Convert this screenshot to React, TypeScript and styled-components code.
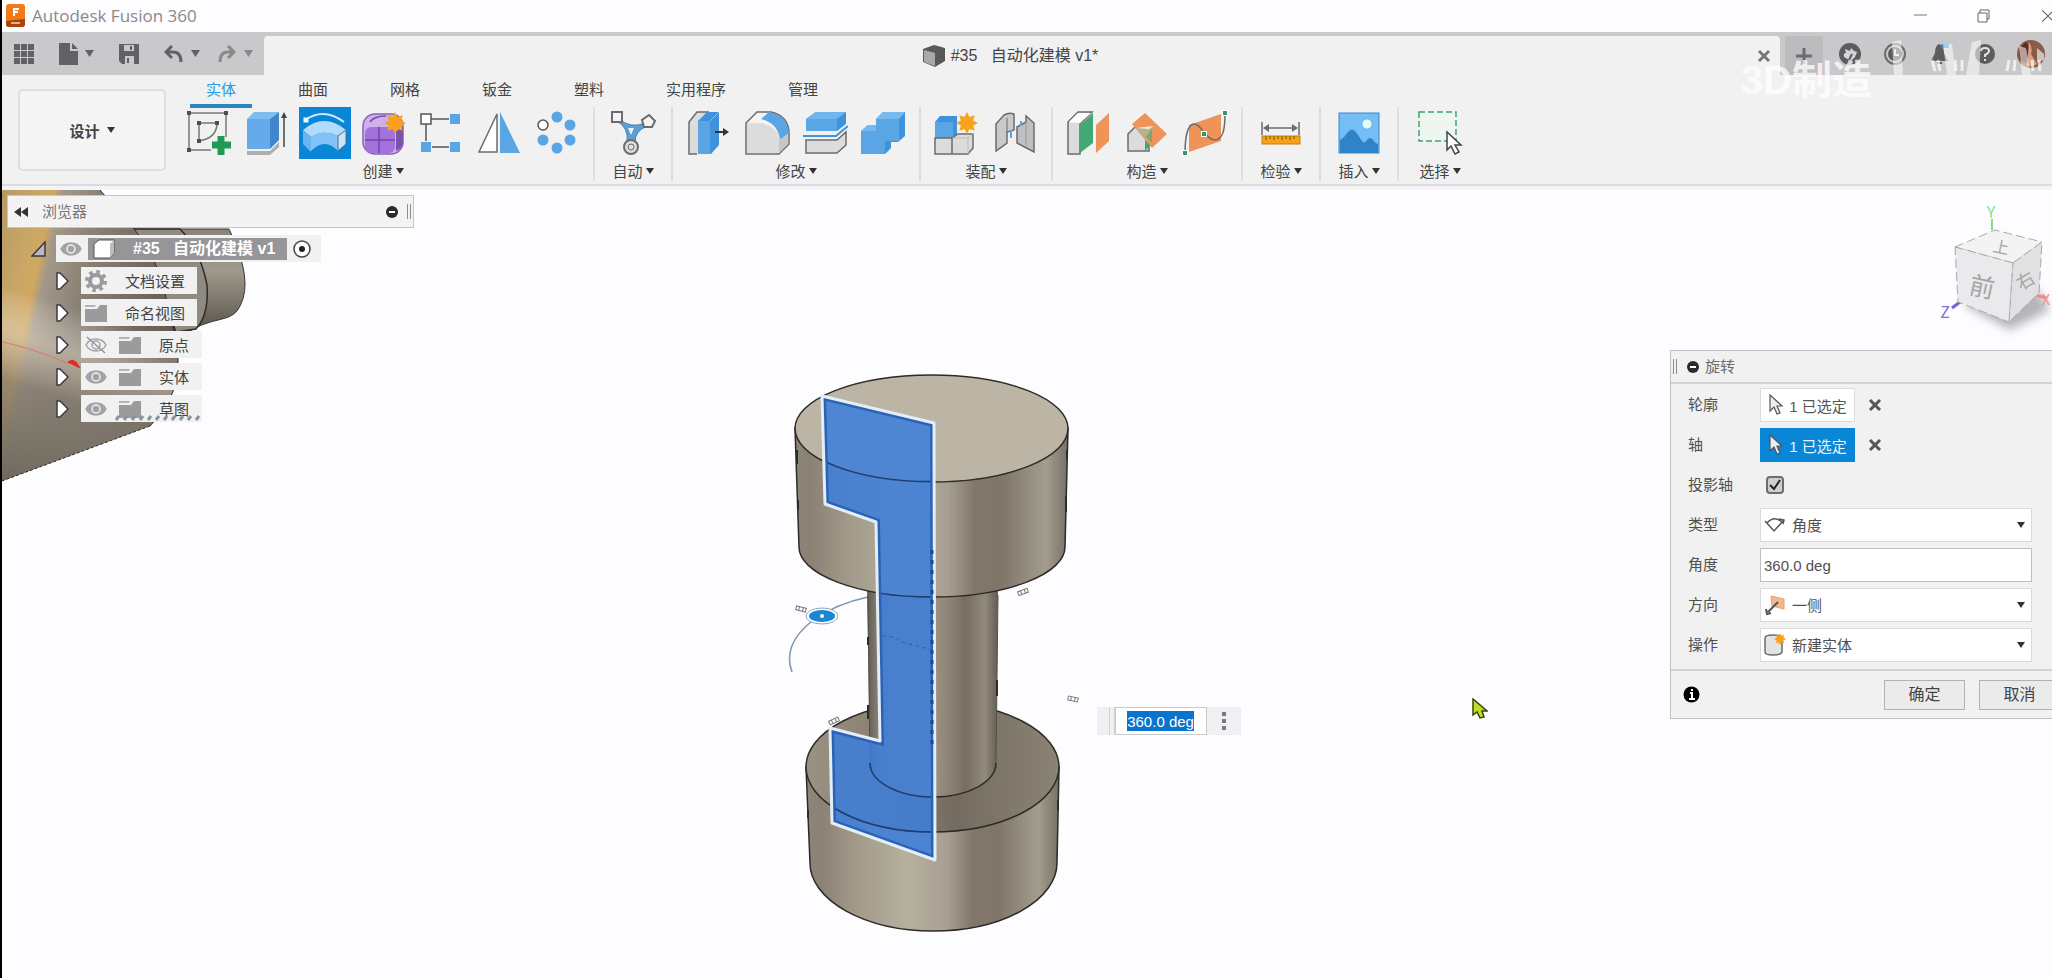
import React from 'react';
import styled, { createGlobalStyle, css } from 'styled-components';

const GlobalStyle = createGlobalStyle`
  *, *::before, *::after { box-sizing: border-box; }
  body { margin: 0; background: #fdfcfe; }
  body, button, input, select {
    font-family: "Liberation Sans", "Noto Sans CJK SC", sans-serif;
    font-size: 15px;
    color: #444;
  }
  button { border: 0; padding: 0; background: none; }
  svg { display: block; flex: none; }
`;

/* ---------- window frame ---------- */

const Window = styled.div`
  display: flex;
  flex-direction: column;
  min-height: 100vh;
  overflow: hidden;
  border-left: 2px solid #000;
`;

const TitleBar = styled.header`
  display: flex;
  align-items: center;
  height: 32px;
  padding-left: 4px;
  background: #fdfcfe;
`;

const AppTitle = styled.h1`
  flex: 1;
  margin: 0 0 0 7px;
  font: 400 17px/24px "Open Sans", sans-serif;
  color: #8a898b;
`;

const WindowButtons = styled.div`
  display: flex;
  gap: 48px;
  margin-right: -4px;
`;

const FlatButton = styled.button`
  display: flex;
  align-items: center;
  justify-content: center;
`;

/* ---------- document bar ---------- */

const DocumentBar = styled.div`
  position: relative;
  display: flex;
  height: 43px;
  background: #c9c8ca;
`;

const QuickTools = styled.div`
  display: flex;
  align-items: center;
  width: 262px;
  padding-left: 12px;
`;

const QuickButton = styled(FlatButton)<{ $gap: number; $dim?: boolean }>`
  gap: 7px;
  margin-right: ${(p) => p.$gap}px;
  opacity: ${(p) => (p.$dim ? 0.5 : 1)};
`;

const DocumentTab = styled.div`
  display: flex;
  flex: 1;
  align-items: center;
  margin-top: 4px;
  padding: 1px 9px 0 0;
  border-radius: 4px 4px 0 0;
  background: #f1f1f2;
`;

const DocumentName = styled.div`
  display: flex;
  flex: 1;
  align-items: center;
  justify-content: center;
  gap: 6px;
  font-size: 16px;
  line-height: 24px;
  white-space: pre;
`;

const AccountTools = styled.div`
  display: flex;
  align-items: center;
  width: 272px;
  padding-left: 5px;
  overflow: hidden;
`;

const NewTabButton = styled(FlatButton)`
  flex: none;
  align-self: flex-end;
  width: 38px;
  height: 39px;
  margin-right: 16px;
  border-radius: 4px 4px 0 0;
  background: #bcbbbd;
`;

const AccountButton = styled(FlatButton)`
  flex: none;
  width: 22px;
  margin-right: 23px;
`;

const Watermark = styled.div`
  position: absolute;
  top: 24px;
  right: 180px;
  font: 700 40px/48px "Liberation Sans", "Noto Sans CJK SC", sans-serif;
  color: rgba(255, 255, 255, 0.75);
  pointer-events: none;
`;

const Streaks = styled.svg`
  position: absolute;
  top: 6px;
  right: 0;
  pointer-events: none;
`;

/* ---------- ribbon ---------- */

const Ribbon = styled.div`
  display: flex;
  height: 111px;
  background: #f1f1f2;
  border-bottom: 2px solid #dcdbde;
`;

const RibbonShade = styled.div`
  height: 4px;
  background: #f4f4f8;
`;

const WorkspaceButton = styled(FlatButton)`
  gap: 7px;
  width: 148px;
  height: 82px;
  margin: 14px 14px 0 16px;
  border: 2px solid #dedde0;
  border-radius: 5px;
  background: #f4f4f5;
  font-weight: 700;
`;

const RibbonBody = styled.div`
  flex: 1;
`;

const RibbonTabs = styled.nav`
  display: flex;
  gap: 30px;
  height: 32px;
  padding-left: 10px;
`;

const RibbonTab = styled.button<{ $active?: boolean }>`
  height: 33px;
  padding: 0 16px 4px;
  line-height: 28px;
  white-space: nowrap;
  ${(p) =>
    p.$active &&
    css`
      color: #2b9ae0;
      border-bottom: 4px solid #2b87bd;
      padding-bottom: 0;
    `}
`;

const RibbonGroups = styled.div`
  display: flex;
`;

const Group = styled.section<{ $single?: boolean }>`
  display: flex;
  flex-direction: column;
  height: 74px;
  padding: 0 ${(p) => (p.$single ? 9 : 7)}px;
  border-right: 2px solid #dedde0;
  &:first-child { padding-left: 0; }
  &:last-child { padding-left: 12px; border-right: 0; }
`;

const GroupTools = styled.div`
  display: flex;
`;

const ToolButton = styled(FlatButton)<{ $active?: boolean }>`
  width: ${(p) => (p.$active ? 52 : 58)}px;
  height: 52px;
  margin: 0 ${(p) => (p.$active ? 3 : 0)}px;
  background: ${(p) => (p.$active ? '#0a86d6' : 'transparent')};
`;

const GroupLabel = styled(FlatButton)`
  gap: 3px;
  height: 22px;
  margin-top: 1px;
  white-space: nowrap;
`;

/* ---------- canvas ---------- */

const Canvas = styled.main`
  position: relative;
  flex: 1;
  min-height: 788px;
  overflow: hidden;
  background: #fdfcfe;
`;

const BackgroundPart = styled.svg`
  position: absolute;
  top: 0;
  left: 0;
`;

const ModelDrawing = styled.svg`
  position: absolute;
  top: 170px;
  left: 38%;
`;

const ViewCube = styled.svg`
  position: absolute;
  top: 0;
  right: 0;
  font-family: "Noto Sans CJK SC", sans-serif;
`;

const PointerArrow = styled.svg`
  position: absolute;
  top: 508px;
  left: 71.7%;
`;

const Browser = styled.aside`
  position: absolute;
  top: 5px;
  left: 5px;
  width: 407px;
`;

const BrowserHeader = styled.div`
  display: flex;
  align-items: center;
  height: 33px;
  padding: 0 2px 0 6px;
  border: 1px solid #c6c5c7;
  background: #f3f3f4;
`;

const BrowserTitle = styled.h2`
  flex: 1;
  margin: 0 0 0 14px;
  font-size: 15px;
  line-height: 22px;
  font-weight: 400;
  color: #777;
`;

const HeaderGrip = styled.span`
  width: 4px;
  height: 15px;
  margin-left: 9px;
  border: solid #8d8c8e;
  border-width: 0 1px;
`;

const Tree = styled.ul`
  display: flex;
  flex-direction: column;
  gap: 5px;
  margin: 7px 0 0;
  padding: 0;
  list-style: none;
`;

const TreeItem = styled.li<{ $root?: boolean }>`
  display: flex;
  align-items: center;
  gap: ${(p) => (p.$root ? 10 : 12)}px;
  height: 27px;
  padding-left: ${(p) => (p.$root ? 24 : 49)}px;
`;

const TreeBox = styled.div<{ $root?: boolean; $wide?: boolean }>`
  position: relative;
  display: flex;
  align-items: center;
  gap: ${(p) => (p.$root ? 6 : 12)}px;
  height: 27px;
  padding-left: 4px;
  width: ${(p) => (p.$root ? 265 : p.$wide ? 121 : 116)}px;
  background: #f1f1f2;
  white-space: pre;
`;

const TreeLabel = styled.span`
  margin-left: 6px;
`;

const RootLabel = styled.span`
  display: flex;
  align-items: center;
  gap: 18px;
  height: 22px;
  width: 199px;
  padding-left: 5px;
  background: #969597;
  color: #fff;
  font-size: 16px;
  line-height: 22px;
  font-weight: 700;
`;

const Hatch = styled.svg`
  position: absolute;
  left: 34px;
  bottom: 1px;
`;

const ValuePopup = styled.div`
  position: absolute;
  top: 517px;
  left: 53.4%;
  display: flex;
  width: 144px;
  height: 28px;
  padding-left: 12px;
  background: #f0eff1;
`;

const PopupGrip = styled.span`
  width: 6px;
  border: solid #d3d2d4;
  border-width: 0 1px;
`;

const PopupField = styled.span`
  display: flex;
  align-items: center;
  justify-content: center;
  width: 92px;
  border: 1px solid #c9c8ca;
  background: #fff;
`;

const PopupInput = styled.input`
  width: 67px;
  height: 20px;
  padding: 0;
  border: 0;
  background: #0a74cc;
  color: #fff;
  font-size: 15px;
`;

const PopupMenu = styled(FlatButton)`
  flex: 1;
`;

/* ---------- dialog ---------- */

const Dialog = styled.form`
  position: absolute;
  top: 160px;
  right: -22px;
  width: 404px;
  border: 1px solid #c2c1c3;
  background: #f1f1f2;
`;

const DialogHeader = styled.div`
  display: flex;
  align-items: center;
  height: 33px;
  border-bottom: 2px solid #d3d2d4;
  span { margin: 0 10px 0 2px; }
`;

const DialogTitle = styled.h2`
  margin: 0 0 0 6px;
  font-size: 15px;
  line-height: 22px;
  font-weight: 400;
  color: #6a6a6a;
`;

const Fields = styled.div`
  display: grid;
  grid-template-columns: 72px 272px;
  grid-auto-rows: 34px;
  row-gap: 6px;
  align-items: center;
  padding: 4px 0 7px 17px;
`;

const FieldLabel = styled.label`
  line-height: 22px;
  color: #505050;
`;

const SelectionRow = styled.div`
  display: flex;
  align-items: center;
  gap: 13px;
`;

const SelectionButton = styled(FlatButton)<{ $active?: boolean }>`
  gap: 5px;
  width: 95px;
  height: 34px;
  border: 1px solid ${(p) => (p.$active ? '#0a86d6' : '#dcdbdd')};
  background: ${(p) => (p.$active ? '#0a86d6' : '#fff')};
  color: ${(p) => (p.$active ? '#e8f6ff' : '#555')};
`;

const Tick = styled.input`
  appearance: none;
  width: 18px;
  height: 18px;
  margin: 0;
  border: 2px solid #6d6c6e;
  border-radius: 4px;
  background: #cfced0;
`;

const TickBox = styled.span`
  position: relative;
  display: flex;
  padding-left: 6px;
  svg { position: absolute; top: 0; left: 6px; pointer-events: none; }
`;

const SelectBox = styled.div`
  position: relative;
  display: flex;
  align-items: center;
  height: 34px;
  border: 1px solid #dad9db;
  background: #fff;
  svg { position: absolute; left: 3px; pointer-events: none; }
  svg:last-child { left: auto; right: 6px; }
`;

const Select = styled.select`
  appearance: none;
  flex: 1;
  height: 32px;
  padding: 0 24px 0 31px;
  border: 0;
  background: transparent;
  color: #505050;
`;

const TextField = styled.input`
  width: 272px;
  height: 34px;
  padding: 0 3px;
  border: 1px solid #bfbec0;
  background: #fff;
  color: #505050;
`;

const DialogFooter = styled.div`
  display: flex;
  align-items: center;
  gap: 14px;
  height: 49px;
  padding: 0 13px 0 12px;
  border-top: 2px solid #d3d2d4;
  svg { margin-right: auto; }
`;

const DialogButton = styled.button`
  width: 81px;
  height: 30px;
  border: 1px solid #b2b1b3;
  background: #ebebec;
  font-size: 16px;
  line-height: 24px;
`;

/* ---------- small drawings ---------- */

const B = '#5aa5e3';
const G = '#dcdcdd';
const S = '#6c6b6d';

const Caret = ({ size = 8, color = '#333' }: { size?: number; color?: string }) => (
  <svg width={size} height={size} viewBox="0 0 9 9" aria-hidden="true">
    <path d="M0 1h9L4.500 8z" fill={color} />
  </svg>
);

const Cross = ({ size = 14, color = '#565557', w = 3 }: { size?: number; color?: string; w?: number }) => (
  <svg width={size} height={size} viewBox="0 0 14 14" aria-hidden="true">
    <path d="M2 2l10 10M12 2L2 12" stroke={color} strokeWidth={w} />
  </svg>
);

const MinusDisc = () => (
  <svg width="12" height="12" viewBox="0 0 12 12" aria-hidden="true">
    <circle cx="6" cy="6" r="6" fill="#2b2a2c" />
    <path d="M3 6h6" stroke="#fff" strokeWidth="2" />
  </svg>
);

const Arrow = ({ fill = '#fff' }: { fill?: string }) => (
  <svg width="16" height="22" viewBox="0 0 16 22" aria-hidden="true">
    <path d="M2 1v16l4-4 3 7 3-1-3-7h5z" fill={fill} stroke="#555" strokeWidth="1.200" />
  </svg>
);

const Eye = ({ off }: { off?: boolean }) => (
  <svg width="22" height="18" viewBox="0 0 22 18" aria-hidden="true">
    <path d="M1 9C5 1 17 1 21 9C17 17 5 17 1 9z" fill={off ? 'none' : '#a3a2a4'} stroke="#a3a2a4" strokeWidth="1.500" />
    <circle cx="11" cy="9" r="4" fill={off ? 'none' : '#a3a2a4'} stroke={off ? '#a3a2a4' : '#f1f1f2'} strokeWidth="1.500" />
    {off && <path d="M2 1l18 16" stroke="#959496" strokeWidth="1.500" />}
  </svg>
);

const Folder = () => (
  <svg width="22" height="18" viewBox="0 0 22 18" aria-hidden="true">
    <path d="M0 5h12l3-4h7v17H0z" fill="#9b9a9c" />
    <path d="M0 1h11l-1 2H0z" fill="#b5b4b6" />
  </svg>
);

const Gear = () => (
  <svg width="22" height="22" viewBox="0 0 22 22" aria-hidden="true">
    <circle cx="11" cy="11" r="6" fill="none" stroke="#9b9a9c" strokeWidth="4" />
    <circle cx="11" cy="11" r="9" fill="none" stroke="#9b9a9c" strokeWidth="4" strokeDasharray="3.500 3.570" />
  </svg>
);

const Star = ({ cx, cy, r = 11 }: { cx: number; cy: number; r?: number }) => {
  const points = Array.from({ length: 16 }, (_, i) => {
    const a = (i * Math.PI) / 8 - Math.PI / 2;
    const d = i % 2 ? r * 0.6 : r;
    return `${cx + d * Math.cos(a)},${cy + d * Math.sin(a)}`;
  }).join(' ');
  return <polygon points={points} fill="#f9a11b" />;
};

const Squares = ({ at, s, fill, stroke }: { at: number[][]; s: number; fill: string; stroke?: string }) => (
  <>
    {at.map(([x, y]) => (
      <rect key={`${x}-${y}`} x={x - s / 2} y={y - s / 2} width={s} height={s} fill={fill} stroke={stroke} />
    ))}
  </>
);

const icons: Record<string, React.ReactNode> = {
  sketch: (
    <>
      <path d="M40 27V3H3v37h22" fill="none" stroke="#777" strokeWidth="1.500" />
      <path d="M13 31V13h18q0 15-18 18" fill="none" stroke="#777" strokeWidth="1.500" />
      <Squares at={[[3, 3], [40, 3], [3, 40], [13, 13], [31, 13], [13, 31]]} s={4} fill="#4f4e50" />
      <path d="M35 26v19M26 35h19" stroke="#1f9b57" strokeWidth="7" />
    </>
  ),
  extrude: (
    <>
      <path d="M3 9l7-7h25l-9 7z" fill="#7fbcf1" />
      <path d="M3 9h23v30H3z" fill="#65aaeb" />
      <path d="M26 9l9-7v28l-9 9z" fill="#3f86cc" />
      <path d="M3 41h23l9-9v5l-9 8H3z" fill="#aeadaf" />
      <path d="M40 37V6" stroke="#444" strokeWidth="1.500" />
      <path d="M37 8l3-6 3 6z" fill="#444" />
    </>
  ),
  revolve: (
    <>
      <path d="M3 10Q22-3 42 12" fill="none" stroke="#cfeaff" strokeWidth="2" />
      <Squares at={[[4, 10]]} s={5} fill="#e6f5ff" />
      <path d="M1 20Q22 2 44 20L36 26Q22 19 9 27z" fill="#b2dcfb" />
      <path d="M1 20l8 7v15l-8-8z" fill="#6cb4ee" />
      <path d="M9 27Q22 19 36 26v15Q23 27 9 41z" fill="#82c3f7" />
      <path d="M36 26l8-6v14l-8 7z" fill="#c9e6fb" stroke="#4f6f88" />
    </>
  ),
  form: (
    <>
      <rect x="3" y="4" width="40" height="40" rx="12" fill="#cdb0ec" stroke="#8a63b5" strokeWidth="1.500" />
      <path d="M36 21l7-4v15q0 6-7 9z" fill="#7b52ad" />
      <rect x="5" y="17" width="30" height="26" rx="6" fill="#a273dd" />
      <path d="M10 12q4-6 16-6M19 17v26M5 30h30" stroke="#7447ab" strokeWidth="1.500" fill="none" />
      <Star cx={35} cy={13} />
    </>
  ),
  pattern: (
    <>
      <path d="M8 9h29M8 9v28h29" fill="none" stroke="#555" strokeWidth="1.500" />
      <rect x="3" y="4" width="10" height="10" fill="#fff" stroke="#555" strokeWidth="1.500" />
      <Squares at={[[37, 9], [8, 37], [37, 37]]} s={11} fill={B} stroke="#f1f1f2" />
    </>
  ),
  mirror: (
    <>
      <path d="M21 4v38H3z" fill="#fff" stroke={S} strokeWidth="1.500" />
      <path d="M24 2l20 41H24z" fill={B} />
    </>
  ),
  circular: (
    <>
      <circle cx="9" cy="15" r="5" fill="#fff" stroke="#555" strokeWidth="1.500" />
      {[[23, 7], [36, 15], [9, 30], [36, 30], [23, 38]].map(([x, y]) => (
        <circle key={`${x}${y}`} cx={x} cy={y} r="5.500" fill={B} />
      ))}
    </>
  ),
  auto: (
    <>
      <path d="M9 9q12 10 26 4l2 3q-12 5-12 16h-8Q19 18 7 11z" fill="#5b9fd4" stroke="#4b7da6" />
      <path d="M18 18h6l-3 7z" fill="#f1f1f2" />
      <rect x="2" y="2" width="10" height="10" fill="#f4f4f4" stroke={S} strokeWidth="2" />
      <path d="M39 5l6 6-3 6h-8l-2-7z" fill="#f4f4f4" stroke={S} strokeWidth="2" />
      <circle cx="21" cy="37" r="7" fill="#ddd" stroke={S} strokeWidth="2" />
      <circle cx="21" cy="37" r="3" fill="none" stroke={S} />
    </>
  ),
  press: (
    <>
      <path d="M11 44H3V12l8-10h12" fill={G} stroke={S} strokeWidth="1.500" />
      <path d="M12 11l9-9h12v33l-8 9H12z" fill="#3f93dc" />
      <path d="M12 11h12v33H12z" fill={B} />
      <path d="M24 11l9-9" stroke="#83c0f3" />
      <path d="M29 22h9" stroke="#333" strokeWidth="2" />
      <path d="M37 18l6 4-6 4z" fill="#333" />
    </>
  ),
  fillet: (
    <>
      <path d="M2 44V13L13 2h14q18 4 18 22v10L35 44z" fill="#f4f4f4" stroke={S} strokeWidth="1.500" />
      <path d="M3 43V13h14q17 3 19 18v12z" fill={G} />
      <path d="M17 9l8-7q18 3 20 21l-9 7Q34 13 17 9z" fill={B} />
      <path d="M35 43V30l9-6v9z" fill="#c6c5c7" />
    </>
  ),
  split: (
    <>
      <path d="M4 9l10-7h30v12l-9 7H4z" fill="#3f93dc" />
      <path d="M4 9l10-7h30l-9 7z" fill="#6fb5ef" />
      <path d="M4 9h31v12H4z" fill={B} />
      <path d="M1 26h33l12-10" fill="none" stroke="#3f93dc" strokeWidth="2" />
      <path d="M4 30h31l9-8v13l-9 8H4z" fill={G} stroke={S} strokeWidth="1.500" />
    </>
  ),
  combine: (
    <>
      <path d="M1 21l7-6h8V9l7-7h22v24l-7 6h-7v6l-6 6H1z" fill="#3f93dc" />
      <path d="M1 21h24v23H1zM16 9h23v22H16z" fill={B} />
      <path d="M16 9l7-7h22l-6 7zM1 21l7-6h8v6z" fill="#75b9f0" />
    </>
  ),
  component: (
    <>
      <path d="M1 12l5-6h17v21H1z" fill="#3f93dc" />
      <path d="M1 12h18v16H1z" fill={B} />
      <path d="M1 28h17v16H1zM18 28l6-4h15v14l-5 6H18z" fill={G} stroke={S} strokeWidth="1.500" />
      <path d="M19 28h15l5-4M34 28v16" fill="none" stroke="#bbb" />
      <Star cx={33} cy={13} />
    </>
  ),
  joint: (
    <>
      <path d="M4 14l8-9q5-3 10-1v16l-7 2v11L4 41z" fill="#c9c8ca" stroke={S} strokeWidth="1.500" />
      <path d="M15 8v14" stroke={S} />
      <path d="M25 17l9-5V6l8 7v29l-17-9z" fill="#c0bfc1" stroke={S} strokeWidth="1.500" />
      <path d="M34 12v23" stroke="#999" />
      <path d="M19 20v8M29 11v5" stroke={B} strokeWidth="2" />
    </>
  ),
  offsetPlane: (
    <>
      <path d="M2 12L12 2h14L14 14v30H2z" fill={G} stroke={S} strokeWidth="1.500" />
      <path d="M3 12L12 3h13L14 13z" fill="#fff" />
      <path d="M14 15L27 3v30L14 43z" fill="#43a873" />
      <path d="M30 15L43 3v28L30 43z" fill="#ee9458" />
    </>
  ),
  planeAngle: (
    <>
      <path d="M4 41V24l7-7h14v24z" fill={G} stroke={S} strokeWidth="1.500" />
      <path d="M21 41V28l8-8v13z" fill="#43a873" />
      <path d="M8 14L21 3l22 21-15 14z" fill="#ee9458" />
      <path d="M12 18h18l-6 13z" fill="#b9b08c" />
      <path d="M12 18l18-2-5 3z" fill="#eee" />
      <path d="M28 18v15l-6-6z" fill="#7ea86b" />
    </>
  ),
  planePath: (
    <>
      <path d="M7 15l32-11v27L7 42z" fill="#ee9458" />
      <path d="M3 43C3 20 8 11 15 15C20 17 23 28 32 30C41 30 43 20 43 3" fill="none" stroke={S} strokeWidth="1.500" />
      <Squares at={[[3, 43], [22, 24], [43, 3]]} s={5} fill="#2f9a61" stroke="#fff" />
    </>
  ),
  measure: (
    <>
      <path d="M4 12v13M41 12v13M7 18h31" stroke={S} strokeWidth="1.500" />
      <path d="M5 18l6-4v8zM40 18l-6-4v8z" fill={S} />
      <rect x="4" y="26" width="38" height="8" fill="#f5a417" stroke="#c97e0b" />
      <path d="M8 26v4M12 26v3M16 26v4M20 26v3M24 26v4M28 26v3M32 26v4M36 26v3" stroke="#7a4e08" />
    </>
  ),
  image: (
    <>
      <rect x="3" y="3" width="40" height="40" fill="#74bdf5" stroke="#3a86c8" />
      <circle cx="31" cy="14" r="4.500" fill="#e6fbf0" />
      <path d="M4 30q5-3 8-8 4-5 8 0l6 9q2 3 5-1 3-4 6 0 2 3 5 4v9H4z" fill="#2f83c8" />
    </>
  ),
  select: (
    <>
      <rect x="2" y="2" width="37" height="29" fill="#eef6f1" stroke="#3fa56d" strokeWidth="1.500" strokeDasharray="6 3" />
      <path d="M30 22v18l4-4 4 8 4-2-4-7h6z" fill="#fff" stroke="#444" strokeWidth="1.500" />
    </>
  ),
};

const groups: { label: string; tools: string[] }[] = [
  { label: '创建', tools: ['sketch', 'extrude', 'revolve', 'form', 'pattern', 'mirror', 'circular'] },
  { label: '自动', tools: ['auto'] },
  { label: '修改', tools: ['press', 'fillet', 'split', 'combine'] },
  { label: '装配', tools: ['component', 'joint'] },
  { label: '构造', tools: ['offsetPlane', 'planeAngle', 'planePath'] },
  { label: '检验', tools: ['measure'] },
  { label: '插入', tools: ['image'] },
  { label: '选择', tools: ['select'] },
];

const tabs = ['实体', '曲面', '网格', '钣金', '塑料', '实用程序', '管理'];

const tree: { label: string; icon: 'gear' | 'folder'; eye?: 'on' | 'off'; hatch?: boolean }[] = [
  { label: '文档设置', icon: 'gear' },
  { label: '命名视图', icon: 'folder' },
  { label: '原点', icon: 'folder', eye: 'off' },
  { label: '实体', icon: 'folder', eye: 'on' },
  { label: '草图', icon: 'folder', eye: 'on', hatch: true },
];

/* ---------- scene drawings ---------- */

const Part = () => (
  <BackgroundPart width="260" height="300" viewBox="2 190 260 300" aria-hidden="true">
    <defs>
      <linearGradient id="brass" x1="0" y1="0" x2="1" y2="0.350">
        <stop offset="0" stopColor="#b59a63" />
        <stop offset="0.180" stopColor="#c9a666" />
        <stop offset="0.260" stopColor="#d0a860" />
        <stop offset="0.310" stopColor="#a3998a" />
        <stop offset="0.500" stopColor="#8b8276" />
        <stop offset="1" stopColor="#625c53" />
      </linearGradient>
      <linearGradient id="sheen" x1="0.200" y1="0" x2="0" y2="1">
        <stop offset="0.350" stopColor="#fff" stopOpacity="0" />
        <stop offset="0.500" stopColor="#e0d6c6" stopOpacity="0.500" />
        <stop offset="0.660" stopColor="#837b6e" stopOpacity="0.700" />
        <stop offset="1" stopColor="#6e685e" stopOpacity="1" />
      </linearGradient>
      <linearGradient id="stub" x1="0" y1="0" x2="0" y2="1">
        <stop offset="0" stopColor="#8a8478" />
        <stop offset="0.400" stopColor="#a09a8d" />
        <stop offset="1" stopColor="#57524a" />
      </linearGradient>
    </defs>
    <path d="M134 229H229Q254 280 240 306Q236 316 222 319Q200 324 190 331L175 332z" fill="url(#stub)" stroke="#3b3833" />
    <path d="M134 229h46q20 20 27 56 2 30-11 44l-20 3z" fill="#8f8a82" stroke="#2f2c28" strokeWidth="1.500" />
    <path d="M2 190h98l34 39q20 22 30 60l14 60v17q-1 20-9 34-7 14-19 26L2 481z" fill="url(#brass)" />
    <path d="M2 190h98l34 39q20 22 30 60l14 60v17q-1 20-9 34-7 14-19 26L2 481z" fill="url(#sheen)" />
    <path d="M100 190l34 39q20 22 30 60l14 60v17q-1 20-9 34-7 14-19 26" fill="none" stroke="#2f2c28" />
    <path d="M150 426L2 481" stroke="#2f2c28" strokeDasharray="3 2" />
    <path d="M2 342q30 6 68 22" stroke="#d87a6c" fill="none" />
    <path d="M68 362l12 6-4-6-4-2z" fill="#e02828" stroke="#e02828" />
  </BackgroundPart>
);

const Marker = ({ x, y, r }: { x: number; y: number; r: number }) => (
  <g transform={`translate(${x} ${y}) rotate(${r})`} fill="#fff" stroke="#77767a">
    <path d="M-5-2h10v4h-10z" />
    <path d="M-2-2v4M2-2v4" />
  </g>
);

const PROFILE = 'M822 396L934 423L935 860L832 823L830 728L880 741L876 522L825 504z';

const Model = () => (
  <ModelDrawing width="310" height="590" viewBox="781 360 310 590" aria-hidden="true">
    <defs>
      <clipPath id="profileArea"><path d={PROFILE} /></clipPath>
      <linearGradient id="side" x1="0" y1="0" x2="1" y2="0">
        <stop offset="0" stopColor="#8b857b" />
        <stop offset="0.060" stopColor="#8b8275" />
        <stop offset="0.200" stopColor="#a29a8a" />
        <stop offset="0.400" stopColor="#b6b09f" />
        <stop offset="0.560" stopColor="#a79f91" />
        <stop offset="0.660" stopColor="#81766a" />
        <stop offset="0.760" stopColor="#7f7669" />
        <stop offset="0.920" stopColor="#a39d8f" />
        <stop offset="1" stopColor="#767067" />
      </linearGradient>
      <linearGradient id="shaft" x1="0" y1="0" x2="1" y2="0">
        <stop offset="0" stopColor="#5f5a52" />
        <stop offset="0.100" stopColor="#8f877a" />
        <stop offset="0.500" stopColor="#9b9385" />
        <stop offset="0.620" stopColor="#8f8577" />
        <stop offset="0.750" stopColor="#776d61" />
        <stop offset="0.900" stopColor="#928a7d" />
        <stop offset="1" stopColor="#625c54" />
      </linearGradient>
      <linearGradient id="lower" x1="0" y1="0" x2="1" y2="0">
        <stop offset="0" stopColor="#9b9382" />
        <stop offset="0.600" stopColor="#746c60" />
        <stop offset="1" stopColor="#8b8475" />
      </linearGradient>
    </defs>
    <path d="M792 672Q782 645 812 621Q835 604 868 597" fill="none" stroke="#7f93b3" strokeWidth="1.500" />
    <path d="M806 767L810 863A123.500 68 0 0 0 1057 863L1059 767z" fill="url(#side)" stroke="#2d2a27" strokeWidth="1.500" />
    <ellipse cx="932.500" cy="767" rx="126.500" ry="65" fill="url(#lower)" stroke="#2d2a27" strokeWidth="1.500" />
    <path d="M867 590L870 763A63 34 0 0 0 996 763L998 590z" fill="url(#shaft)" />
    <path d="M870 763A63 34 0 0 0 996 763" fill="none" stroke="#2d2a27" strokeWidth="1.500" />
    <path d="M868 595l2 168M998 595l-2 168" stroke="#55504a" />
    <path d="M795 428L799 547A133 50 0 0 0 1065 547L1068 428z" fill="url(#side)" stroke="#2d2a27" strokeWidth="1.500" />
    <ellipse cx="931.500" cy="428.500" rx="136.500" ry="53.500" fill="#bcb5a6" stroke="#2d2a27" strokeWidth="1.500" />
    <path d={PROFILE} fill="#3d7edb" fillOpacity="0.860" />
    <g clipPath="url(#profileArea)" fill="none">
      <path d="M795 428A136.500 53.500 0 0 0 1068 428M799 547A133 50 0 0 0 1065 547M870 763A63 34 0 0 0 996 763M806 767A126.500 65 0 0 0 1059 767" stroke="#1f3d6b" strokeWidth="1.500" />
      <path d={PROFILE} stroke="#2a62b8" strokeWidth="8" />
    </g>
    <path d={PROFILE} fill="none" stroke="#e4eef7" strokeWidth="3" strokeLinejoin="round" />
    <path d="M932 550V750" stroke="#1c4a92" strokeWidth="3" strokeDasharray="4 6" />
    <path d="M882 636q14 0 20 6l30 8" fill="none" stroke="#2c62b4" strokeDasharray="4 3" />
    <path d="M797 450v14M798 500v10M868 637v8M868 705v14M997 680v16M1067 450v9M1066 496v16M808 810v8M1058 800v10" stroke="#2d2a27" strokeWidth="2" />
    <ellipse cx="822" cy="616" rx="16" ry="8" fill="#fff" stroke="#8aa7c4" />
    <ellipse cx="822" cy="616" rx="13" ry="6" fill="#1a87d4" />
    <circle cx="822" cy="616" r="2" fill="#fff" />
    <Marker x={1023} y={592} r={-20} />
    <Marker x={801} y={609} r={15} />
    <Marker x={834} y={721} r={-25} />
    <Marker x={1073} y={699} r={12} />
  </ModelDrawing>
);

const Cube = () => (
  <ViewCube width="122" height="160" viewBox="1930 190 122 160" role="img" aria-label="ViewCube">
    <defs>
      <filter id="soft" x="-50%" y="-50%" width="200%" height="200%">
        <feGaussianBlur stdDeviation="5" />
      </filter>
    </defs>
    <path d="M1962 304l48 26 40-20-12-20z" fill="#b5b4b8" filter="url(#soft)" />
    <path d="M1992 230v-11" stroke="#7fe08a" strokeWidth="2" />
    <path d="M1952 308l8-6" stroke="#6f63dc" strokeWidth="3" />
    <path d="M2036 295l10 3" stroke="#f08a8a" strokeWidth="3" />
    <g stroke="#a9a8ab" strokeDasharray="9 4">
      <path d="M1955 247l40-17 47 12-29 21z" fill="#f3f3f4" />
      <path d="M1955 247l58 16-4 59-51-20z" fill="#eaeaec" />
      <path d="M2013 263l29-21-3 51-30 29z" fill="#e1e1e3" />
    </g>
    <g fill="#a5a4a7" textAnchor="middle">
      <text x="1982" y="296" fontSize="25" transform="rotate(12 1982 287)">前</text>
      <text x="2001" y="253" fontSize="16" transform="rotate(12 2001 247)">上</text>
      <text x="2026" y="287" fontSize="18" transform="rotate(-30 2026 282)">右</text>
    </g>
    <g fontSize="16" textAnchor="middle">
      <text x="1991" y="218" fill="#7fe08a">Y</text>
      <text x="1945" y="318" fill="#7d72e0">Z</text>
      <text x="2046" y="305" fontSize="14" fill="#f08a8a">X</text>
    </g>
  </ViewCube>
);

/* ---------- app ---------- */

export default function App() {
  return (
    <>
      <GlobalStyle />
      <Window>
        <TitleBar>
          <svg width="19" height="24" viewBox="0 0 19 24" aria-hidden="true">
            <rect width="19" height="23" rx="3" fill="#f07a1a" />
            <path d="M0 17l19-2v5q0 3-3 3H3q-3 0-3-3z" fill="#a8430d" />
            <path d="M8 12V5h5M8 8h4" stroke="#fff" strokeWidth="2" fill="none" />
            <path d="M5 19h9" stroke="#e8b08a" strokeWidth="2" />
          </svg>
          <AppTitle>Autodesk Fusion 360</AppTitle>
          <WindowButtons>
            <FlatButton aria-label="最小化">
              <svg width="16" height="16" viewBox="0 0 16 16"><path d="M2 7h13" stroke="#777" /></svg>
            </FlatButton>
            <FlatButton aria-label="还原">
              <svg width="16" height="16" viewBox="0 0 16 16">
                <path d="M2 5h9v9H2zM4 5V2h9v9h-2" fill="none" stroke="#666" />
              </svg>
            </FlatButton>
            <FlatButton aria-label="关闭"><Cross size={16} w={1} color="#666" /></FlatButton>
          </WindowButtons>
        </TitleBar>

        <DocumentBar>
          <QuickTools>
            <QuickButton $gap={25} aria-label="数据面板">
              <svg width="20" height="20" viewBox="0 0 20 20">
                <Squares at={[[3, 3], [10, 3], [17, 3], [3, 10], [10, 10], [17, 10], [3, 17], [10, 17], [17, 17]]} s={6} fill="#626163" />
              </svg>
            </QuickButton>
            <QuickButton $gap={25} aria-label="文件">
              <svg width="19" height="22" viewBox="0 0 19 22">
                <path d="M0 0h11v8h8v14H0z" fill="#626163" /><path d="M13 0l6 6h-6z" fill="#626163" />
              </svg>
              <Caret size={9} color="#626163" />
            </QuickButton>
            <QuickButton $gap={25} aria-label="保存">
              <svg width="20" height="20" viewBox="0 0 20 20">
                <path d="M0 0h20v20H3l-3-3z" fill="#626163" />
                <path d="M5 1h10v6H5zM6 12h9v8H6z" fill="#c9c8ca" /><path d="M11 2h2v4h-2zM8 14h2v5H8z" fill="#626163" />
              </svg>
            </QuickButton>
            <QuickButton $gap={17} aria-label="撤销">
              <svg width="20" height="18" viewBox="0 0 20 18">
                <path d="M8 1L2 7l6 6M2 7h7q8 0 8 10" fill="none" stroke="#626163" strokeWidth="3" />
              </svg>
              <Caret size={9} color="#626163" />
            </QuickButton>
            <QuickButton $gap={0} $dim aria-label="重做">
              <svg width="20" height="18" viewBox="0 0 20 18">
                <path d="M11 1l6 6-6 6M17 7h-6q-8 0-8 10" fill="none" stroke="#4a494b" strokeWidth="3" />
              </svg>
              <Caret size={9} color="#4a494b" />
            </QuickButton>
          </QuickTools>

          <DocumentTab>
            <DocumentName>
              <svg width="22" height="22" viewBox="0 0 22 22" aria-hidden="true">
                <path d="M0 4l11-4 11 3v13l-10 6L0 17z" fill="#59585a" />
                <path d="M1 5l11 3v13L1 17z" fill="#a9a8aa" />
              </svg>
              <span>{'#35   自动化建模 v1*'}</span>
            </DocumentName>
            <FlatButton aria-label="关闭文档"><Cross color="#777678" /></FlatButton>
          </DocumentTab>

          <AccountTools>
            <NewTabButton aria-label="新建">
              <svg width="18" height="18" viewBox="0 0 18 18"><path d="M9 1v16M1 9h16" stroke="#6d6c6e" strokeWidth="3" /></svg>
            </NewTabButton>
            <AccountButton aria-label="扩展">
              <svg width="22" height="22" viewBox="0 0 22 22">
                <circle cx="11" cy="11" r="11" fill="#5d5c5e" />
                <path d="M5 14q-1-4 2-4l-1-4 5 2 1-3 3 3 3 1-2 5-4 4z" fill="#d5d4d6" />
                <path d="M10 17l3-6" stroke="#5d5c5e" strokeWidth="2" />
              </svg>
            </AccountButton>
            <AccountButton aria-label="作业状态">
              <svg width="22" height="22" viewBox="0 0 22 22">
                <circle cx="11" cy="11" r="10" fill="none" stroke="#6d6c6e" strokeWidth="2" />
                <circle cx="11" cy="11" r="7" fill="#5d5c5e" />
                <path d="M11 6v6h4" stroke="#ddd" fill="none" strokeWidth="2" />
              </svg>
            </AccountButton>
            <AccountButton aria-label="通知">
              <svg width="22" height="22" viewBox="0 0 22 22">
                <path d="M10 1q5 2 5 9l4 8H2l4-8q0-7 4-9z" fill="#5d5c5e" />
                <path d="M8 19h5v2H8z" fill="#5d5c5e" />
                <rect x="12" y="1" width="8" height="4" rx="1" fill="#2f8ed6" />
              </svg>
            </AccountButton>
            <AccountButton aria-label="帮助">
              <svg width="22" height="22" viewBox="0 0 22 22">
                <circle cx="11" cy="11" r="10" fill="#5d5c5e" />
                <path d="M7 8q0-3 4-3 4 0 4 3 0 2-4 4v2M11 16v2" stroke="#e3e2e4" strokeWidth="2" fill="none" />
              </svg>
            </AccountButton>
            <AccountButton aria-label="账户">
              <svg width="30" height="28" viewBox="0 0 30 28">
                <circle cx="16" cy="14" r="14" fill="#8c5a48" />
                <path d="M5 20q-3-12 6-18l4 6-2 16z" fill="#5c2c20" />
                <path d="M14 2q4 6 2 12l6 10q-6 4-10 1z" fill="#d8a184" />
                <path d="M22 8l7 6v6l-7 2z" fill="#c9c3bf" />
              </svg>
            </AccountButton>
          </AccountTools>

          <Streaks width="170" height="40" viewBox="0 0 170 40" aria-hidden="true">
            <path d="M10 4l9-2 2 35h-9zM61 6h9l4 31h-9zM90 4l9-2-2 35H84zM137 8l7 2 5 27h-9z" fill="#fff" fillOpacity="0.550" />
            <path d="M50 22l3 11M56 22l2 11M73 22l1 11M80 22v11M127 22l-2 11M133 22l-1 11M150 22l1 11M157 22l1 11" stroke="#fff" strokeOpacity="0.700" strokeWidth="3" />
          </Streaks>
          <Watermark>3D制造</Watermark>
        </DocumentBar>

        <Ribbon>
          <WorkspaceButton>设计 <Caret /></WorkspaceButton>
          <RibbonBody>
            <RibbonTabs>
              {tabs.map((tab, i) => <RibbonTab key={tab} $active={i === 0}>{tab}</RibbonTab>)}
            </RibbonTabs>
            <RibbonGroups>
              {groups.map((group) => (
                <Group key={group.label} $single={group.tools.length === 1}>
                  <GroupTools>
                    {group.tools.map((tool) => (
                      <ToolButton key={tool} $active={tool === 'revolve'} aria-label={tool}>
                        <svg width="46" height="46" viewBox="0 0 46 46">{icons[tool]}</svg>
                      </ToolButton>
                    ))}
                  </GroupTools>
                  <GroupLabel>{group.label}<Caret /></GroupLabel>
                </Group>
              ))}
            </RibbonGroups>
          </RibbonBody>
        </Ribbon>
        <RibbonShade />

        <Canvas>
          <Part />
          <Model />
          <Cube />

          <Browser>
            <BrowserHeader>
              <svg width="14" height="10" viewBox="0 0 14 10" aria-hidden="true">
                <path d="M7 0v10L0 5zM14 0v10L7 5z" fill="#333" />
              </svg>
              <BrowserTitle>浏览器</BrowserTitle>
              <FlatButton aria-label="折叠"><MinusDisc /></FlatButton>
              <HeaderGrip />
            </BrowserHeader>
            <Tree>
              <TreeItem $root>
                <svg width="15" height="16" viewBox="0 0 15 16" aria-hidden="true">
                  <path d="M14 1v14H1z" fill="#bcb9c2" stroke="#3b3a3d" strokeWidth="1.500" />
                </svg>
                <TreeBox $root>
                  <Eye />
                  <RootLabel>
                    <svg width="22" height="20" viewBox="0 0 22 20" aria-hidden="true">
                      <path d="M1 5l5-4h15v13l-4 5H1z" fill="#fff" stroke="#555" />
                      <path d="M17 5l4-4v13l-4 5z" fill="#bbb" />
                    </svg>
                    {'#35   自动化建模 v1'}
                  </RootLabel>
                  <svg width="18" height="18" viewBox="0 0 18 18" aria-hidden="true">
                    <circle cx="9" cy="9" r="8" fill="#fff" stroke="#444" strokeWidth="1.500" />
                    <circle cx="9" cy="9" r="3" fill="#222" />
                  </svg>
                </TreeBox>
              </TreeItem>
              {tree.map((item) => (
                <TreeItem key={item.label}>
                  <svg width="13" height="18" viewBox="0 0 13 18" aria-hidden="true">
                    <path d="M1 1h3l8 8-8 8H1z" fill="#fff" stroke="#3b3a3d" strokeWidth="1.500" />
                  </svg>
                  <TreeBox $wide={!!item.eye}>
                    {item.eye && <Eye off={item.eye === 'off'} />}
                    {item.icon === 'gear' ? <Gear /> : <Folder />}
                    <TreeLabel>{item.label}</TreeLabel>
                    {item.hatch && (
                      <Hatch width="88" height="6" viewBox="0 0 88 6" aria-hidden="true">
                        <path
                          d={Array.from({ length: 11 }, (_, i) => `M${i * 8 + 1} 5l3-4`).join('')}
                          stroke="#8794a0"
                          strokeWidth="3"
                        />
                      </Hatch>
                    )}
                  </TreeBox>
                </TreeItem>
              ))}
            </Tree>
          </Browser>

          <ValuePopup>
            <PopupGrip />
            <PopupField>
              <PopupInput aria-label="旋转角度" defaultValue="360.0 deg" />
            </PopupField>
            <PopupMenu aria-label="更多">
              <svg width="4" height="18" viewBox="0 0 4 18">
                <Squares at={[[2, 2], [2, 9], [2, 16]]} s={4} fill="#7b7a7c" />
              </svg>
            </PopupMenu>
          </ValuePopup>

          <PointerArrow width="16" height="22" viewBox="0 0 16 22" aria-hidden="true">
            <path d="M1 1v16l4-3 3 6 4-1-2-6h5z" fill="#c3dc22" stroke="#3c4410" strokeWidth="1.500" />
          </PointerArrow>

          <Dialog onSubmit={(e) => e.preventDefault()}>
            <DialogHeader>
              <HeaderGrip />
              <FlatButton type="button" aria-label="折叠"><MinusDisc /></FlatButton>
              <DialogTitle>旋转</DialogTitle>
            </DialogHeader>
            <Fields>
              <FieldLabel htmlFor="profile">轮廓</FieldLabel>
              <SelectionRow>
                <SelectionButton id="profile" type="button"><Arrow fill="#eee" />1 已选定</SelectionButton>
                <FlatButton type="button" aria-label="清除轮廓"><Cross /></FlatButton>
              </SelectionRow>
              <FieldLabel htmlFor="axis">轴</FieldLabel>
              <SelectionRow>
                <SelectionButton id="axis" type="button" $active><Arrow fill="#e6f0f8" />1 已选定</SelectionButton>
                <FlatButton type="button" aria-label="清除轴"><Cross /></FlatButton>
              </SelectionRow>
              <FieldLabel htmlFor="project">投影轴</FieldLabel>
              <TickBox>
                <Tick id="project" type="checkbox" defaultChecked />
                <svg width="18" height="18" viewBox="0 0 18 18" aria-hidden="true">
                  <path d="M4 9l4 4 6-9" fill="none" stroke="#222" strokeWidth="2" />
                </svg>
              </TickBox>
              <FieldLabel htmlFor="type">类型</FieldLabel>
              <SelectBox>
                <svg width="22" height="20" viewBox="0 0 22 20" aria-hidden="true">
                  <path d="M1 6l9 10L20 5M3 8q7-8 15-1M15 4l5 1-1 4" fill="none" stroke="#555" strokeWidth="1.500" />
                </svg>
                <Select id="type"><option>角度</option></Select>
                <Caret />
              </SelectBox>
              <FieldLabel htmlFor="angle">角度</FieldLabel>
              <TextField id="angle" defaultValue="360.0 deg" />
              <FieldLabel htmlFor="direction">方向</FieldLabel>
              <SelectBox>
                <svg width="22" height="22" viewBox="0 0 22 22" aria-hidden="true">
                  <path d="M7 2l13 3v10L8 12z" fill="#f3b98d" stroke="#e2a071" />
                  <path d="M14 8L4 18M2 15l1 5 4-1" fill="none" stroke="#555" strokeWidth="2" />
                </svg>
                <Select id="direction"><option>一侧</option></Select>
                <Caret />
              </SelectBox>
              <FieldLabel htmlFor="operation">操作</FieldLabel>
              <SelectBox>
                <svg width="22" height="24" viewBox="0 0 22 24" aria-hidden="true">
                  <path d="M1 5q0-3 8-3t9 3v14q-1 3-9 3t-8-3z" fill="#e3e3e4" stroke="#6c6b6d" strokeWidth="1.500" />
                  <Star cx={16} cy={6} r={6} />
                </svg>
                <Select id="operation"><option>新建实体</option></Select>
                <Caret />
              </SelectBox>
            </Fields>
            <DialogFooter>
              <svg width="17" height="17" viewBox="0 0 17 17" role="img" aria-label="信息">
                <circle cx="8.500" cy="8.500" r="8" fill="#000" />
                <path d="M9 3v2M7 7h2v6M6 13h6" stroke="#fff" strokeWidth="2" fill="none" />
              </svg>
              <DialogButton type="submit">确定</DialogButton>
              <DialogButton type="button">取消</DialogButton>
            </DialogFooter>
          </Dialog>
        </Canvas>
      </Window>
    </>
  );
}
